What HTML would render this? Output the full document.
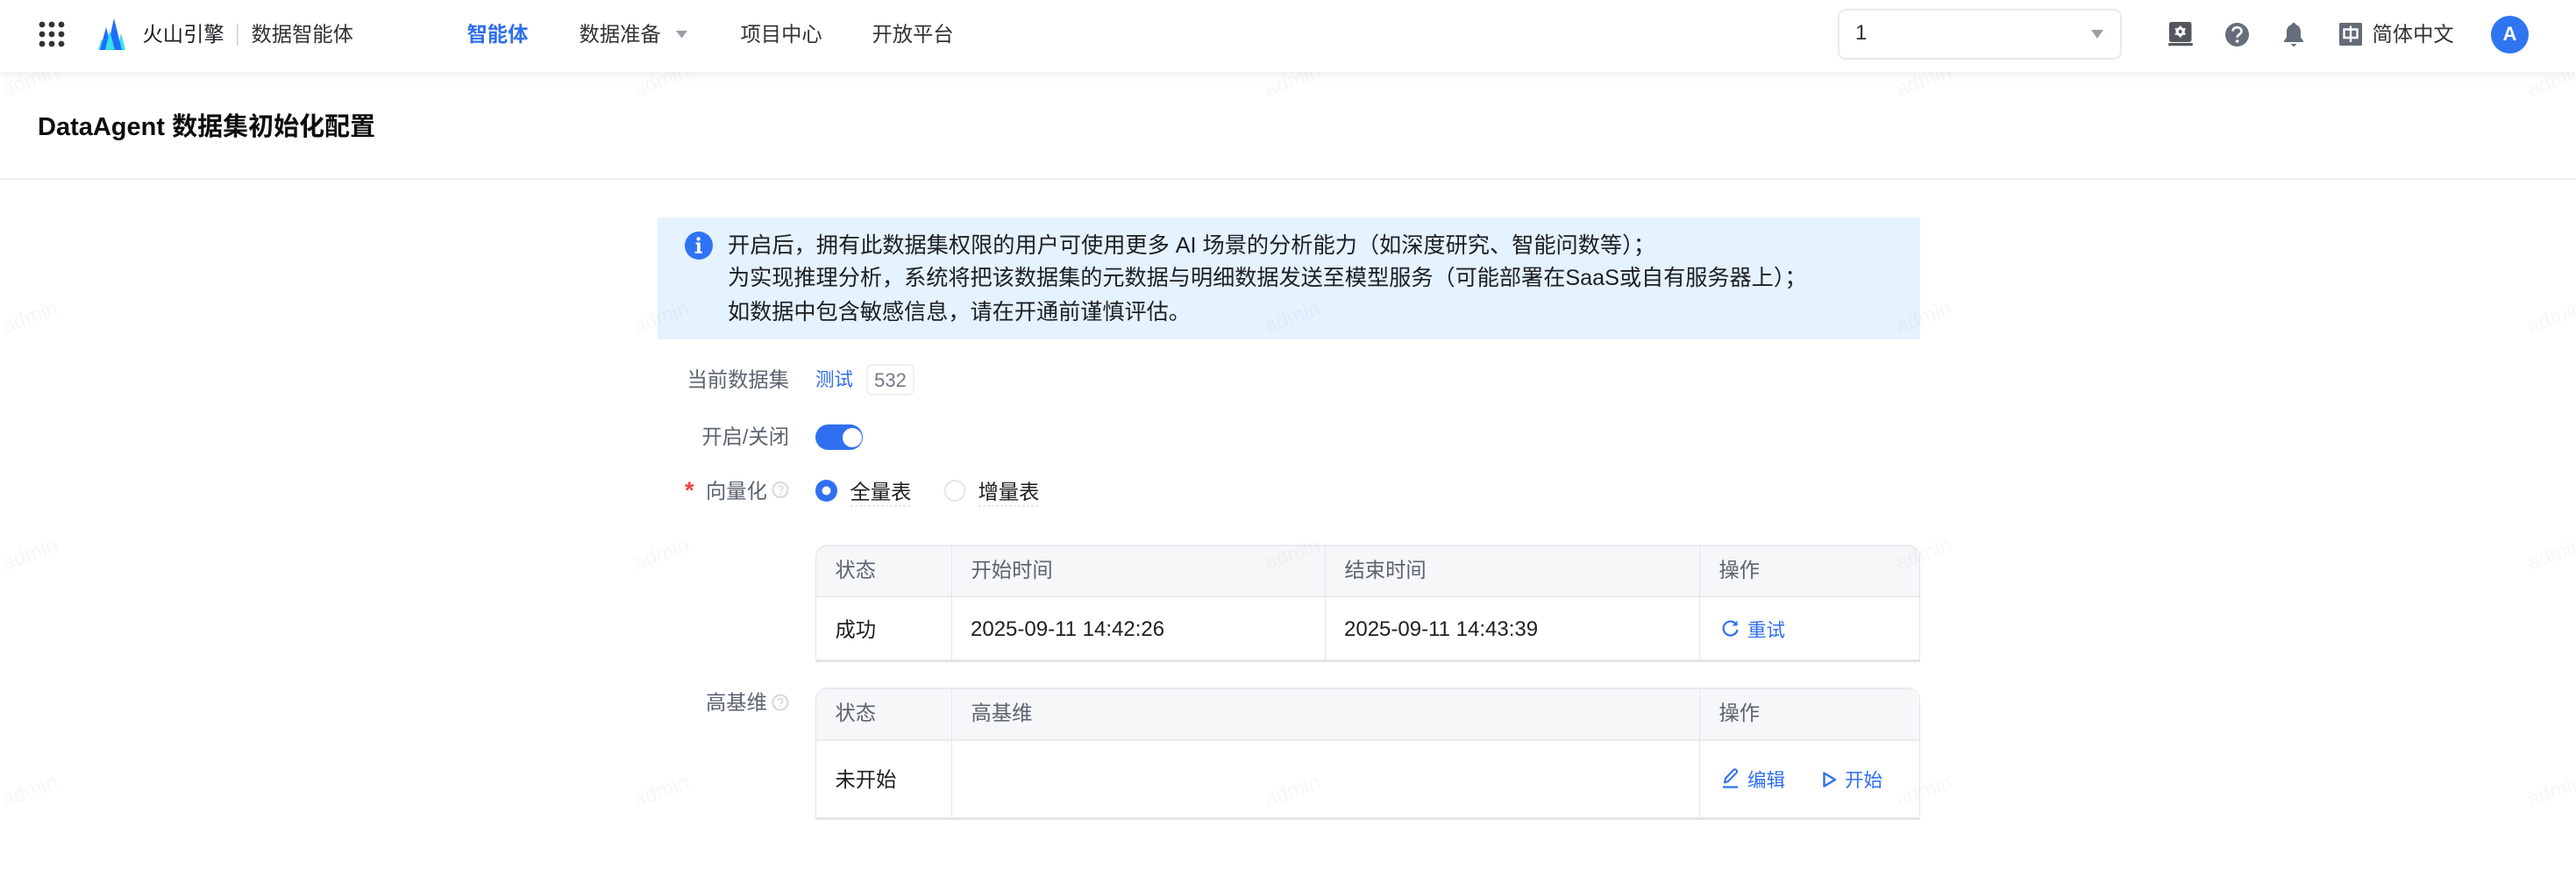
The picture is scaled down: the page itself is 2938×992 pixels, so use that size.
<!DOCTYPE html>
<html lang="zh-CN">
<head>
<meta charset="utf-8">
<title>DataAgent 数据集初始化配置</title>
<style>
html,body{margin:0;padding:0;background:#fff;}
body{position:relative;width:2938px;height:992px;overflow:hidden;font-family:"Liberation Sans","Noto Sans CJK SC",sans-serif;font-size:23.3px;color:#1c1f23;}
.t{position:absolute;white-space:nowrap;line-height:36px;height:36px;}
.box{position:absolute;box-sizing:border-box;}
.lab{color:#5c6470;}
.th{color:#5c6470;}
.blue{color:#2f6fed;}
.hdr{position:absolute;left:0;top:0;width:2938px;height:82px;background:#fff;box-shadow:0 2px 10px rgba(0,0,0,.09);z-index:5;}
svg{position:absolute;left:0;top:0;}
</style>
</head>
<body>

<!-- Page title -->
<div class="t" style="left:43px;top:127px;font-size:29px;font-weight:700;color:#0c0d0e">DataAgent 数据集初始化配置</div>
<div class="box" style="left:0;top:203px;width:2938px;height:2px;background:#eef0f3"></div>

<!-- Alert -->
<div class="box" style="left:750px;top:248px;width:1440px;height:139px;background:#e5f2ff"></div>
<svg width="2938" height="992" style="pointer-events:none">
  <circle cx="797" cy="280" r="16" fill="#2f73f5"/>
  <path d="M793.500 276.500h5.200v10.300h2.300v2h-8.400v-2h2.500v-8.300h-1.600z" fill="#fff"/>
  <circle cx="796.600" cy="272.400" r="2.200" fill="#fff"/>
</svg>
<div class="t" style="left:830px;top:262px;font-size:25.2px">开启后，拥有此数据集权限的用户可使用更多 AI 场景的分析能力（如深度研究、智能问数等）；</div>
<div class="t" style="left:830px;top:299px;font-size:25.15px">为实现推理分析，系统将把该数据集的元数据与明细数据发送至模型服务（可能部署在SaaS或自有服务器上）；</div>
<div class="t" style="left:830px;top:338px;font-size:25.15px">如数据中包含敏感信息，请在开通前谨慎评估。</div>

<!-- Form -->
<div class="t lab" style="right:2038px;top:414.500px">当前数据集</div>
<div class="t blue" style="left:930px;top:415px;font-size:21.5px">测试</div>
<div class="box" style="left:988px;top:415px;width:55px;height:36px;border:2px solid #eef0f3;border-radius:7px"></div>
<div class="t" style="left:988px;top:416px;width:55px;text-align:center;color:#737a87;font-size:22px">532</div>

<div class="t lab" style="right:2038px;top:479.500px">开启/关闭</div>
<div class="box" style="left:930px;top:484px;width:54px;height:29px;border-radius:15px;background:#3070f0"></div>
<div class="box" style="left:961px;top:487.500px;width:22px;height:22px;border-radius:50%;background:#fff"></div>

<div class="t" style="left:781px;top:541px;color:#f04142;font-size:27px;font-weight:700">*</div>
<div class="t lab" style="left:805px;top:541.500px">向量化</div>
<svg width="2938" height="992" style="pointer-events:none">
  <circle cx="890" cy="558.500" r="8.500" fill="none" stroke="#d4d8de" stroke-width="2"/>
  <path d="M887.400 556.200c.3-1.500 1.300-2.200 2.700-2.200 1.500 0 2.700 1 2.700 2.400 0 2.200-2.700 2.200-2.700 4.200" fill="none" stroke="#d4d8de" stroke-width="1.600"/>
  <circle cx="890.100" cy="563" r="1" fill="#d4d8de"/>
  <circle cx="890" cy="801" r="8.500" fill="none" stroke="#d4d8de" stroke-width="2"/>
  <path d="M887.400 798.700c.3-1.500 1.300-2.200 2.700-2.200 1.500 0 2.700 1 2.700 2.400 0 2.200-2.700 2.200-2.700 4.200" fill="none" stroke="#d4d8de" stroke-width="1.600"/>
  <circle cx="890.100" cy="805.500" r="1" fill="#d4d8de"/>
  <circle cx="942.500" cy="559.500" r="12.500" fill="#3070f0"/>
  <circle cx="942.500" cy="559.500" r="5" fill="#fff"/>
  <circle cx="1089" cy="559.500" r="11.500" fill="#fff" stroke="#e3e5ea" stroke-width="2"/>
  <path d="M970 577h69M1116 577h70" stroke="#dcdfe5" stroke-width="1.500" stroke-dasharray="3 2" fill="none"/>
</svg>
<div class="t" style="left:969.500px;top:542.500px">全量表</div>
<div class="t" style="left:1115.500px;top:542.500px">增量表</div>

<!-- Table 1 -->
<div class="box" style="left:930px;top:621px;width:1260px;height:134px;border:1px solid #e3e5ea;border-top:2px solid #e8eaee;border-bottom-width:3px;border-radius:14px 14px 0 0;overflow:hidden">
  <div class="box" style="left:0;top:0;width:100%;height:58px;background:#f6f7f9;border-bottom:2px solid #e8eaee"></div>
  <div class="box" style="left:154px;top:0;width:1px;height:100%;background:#e3e5ea"></div>
  <div class="box" style="left:580px;top:0;width:1px;height:100%;background:#e3e5ea"></div>
  <div class="box" style="left:1007px;top:0;width:1px;height:100%;background:#e3e5ea"></div>
</div>
<div class="t th" style="left:952.500px;top:632px">状态</div>
<div class="t th" style="left:1107.500px;top:632px">开始时间</div>
<div class="t th" style="left:1533.500px;top:632px">结束时间</div>
<div class="t th" style="left:1960.500px;top:632px">操作</div>
<div class="t" style="left:952.500px;top:699.500px">成功</div>
<div class="t" style="left:1107px;top:699.500px;font-size:24px">2025-09-11 14:42:26</div>
<div class="t" style="left:1533px;top:699.500px;font-size:24px">2025-09-11 14:43:39</div>
<div class="t blue" style="left:1993px;top:701px;font-size:21.5px">重试</div>

<!-- Table 2 -->
<div class="t lab" style="left:805px;top:783px">高基维</div>
<div class="box" style="left:930px;top:784px;width:1260px;height:151px;border:1px solid #e3e5ea;border-top:2px solid #e8eaee;border-bottom-width:3px;border-radius:14px 14px 0 0;overflow:hidden">
  <div class="box" style="left:0;top:0;width:100%;height:59px;background:#f6f7f9;border-bottom:2px solid #e8eaee"></div>
  <div class="box" style="left:154px;top:0;width:1px;height:100%;background:#e3e5ea"></div>
  <div class="box" style="left:1007px;top:0;width:1px;height:100%;background:#e3e5ea"></div>
</div>
<div class="t th" style="left:952.500px;top:795px">状态</div>
<div class="t th" style="left:1107.500px;top:795px">高基维</div>
<div class="t th" style="left:1960.500px;top:795px">操作</div>
<div class="t" style="left:952.500px;top:870.500px">未开始</div>
<div class="t blue" style="left:1993px;top:871.500px;font-size:21.5px">编辑</div>
<div class="t blue" style="left:2104px;top:871.500px;font-size:21.5px">开始</div>
<svg width="2938" height="992" style="pointer-events:none">
  <path d="M1979.600 711.200A8 8 0 1 0 1981.500 718" fill="none" stroke="#2f6fed" stroke-width="2.200"/>
  <path d="M1981.600 707.500v6h-6z" fill="#2f6fed"/>
  <path d="M1967 892.500l1-5 9-9.500c1-1 2.400-1 3.300 0s1 2.400 0 3.300l-9.300 9.600z" fill="none" stroke="#2f6fed" stroke-width="2" stroke-linejoin="round"/>
  <path d="M1965 897.500h17" stroke="#2f6fed" stroke-width="2.200"/>
  <path d="M2080.500 881.500l12.500 7.500-12.500 7.500z" fill="none" stroke="#2f6fed" stroke-width="2.400" stroke-linejoin="round"/>
</svg>

<!-- Watermarks -->
<svg width="2938" height="992" style="pointer-events:none;z-index:3" font-family="Liberation Sans, sans-serif" font-size="24" fill="#000" fill-opacity=".032">
  <text transform="translate(6 110) rotate(-20)">admin</text>
  <text transform="translate(726 110) rotate(-20)">admin</text>
  <text transform="translate(1446 110) rotate(-20)">admin</text>
  <text transform="translate(2166 110) rotate(-20)">admin</text>
  <text transform="translate(2886 110) rotate(-20)">admin</text>
  <text transform="translate(6 380) rotate(-20)">admin</text>
  <text transform="translate(726 380) rotate(-20)">admin</text>
  <text transform="translate(1446 380) rotate(-20)">admin</text>
  <text transform="translate(2166 380) rotate(-20)">admin</text>
  <text transform="translate(2886 380) rotate(-20)">admin</text>
  <text transform="translate(6 650) rotate(-20)">admin</text>
  <text transform="translate(726 650) rotate(-20)">admin</text>
  <text transform="translate(1446 650) rotate(-20)">admin</text>
  <text transform="translate(2166 650) rotate(-20)">admin</text>
  <text transform="translate(2886 650) rotate(-20)">admin</text>
  <text transform="translate(6 920) rotate(-20)">admin</text>
  <text transform="translate(726 920) rotate(-20)">admin</text>
  <text transform="translate(1446 920) rotate(-20)">admin</text>
  <text transform="translate(2166 920) rotate(-20)">admin</text>
  <text transform="translate(2886 920) rotate(-20)">admin</text>
</svg>

<!-- Header -->
<div class="hdr">
  <svg width="2938" height="82">
    <g fill="#333">
      <circle cx="48" cy="28" r="3.400"/><circle cx="59" cy="28" r="3.400"/><circle cx="70" cy="28" r="3.400"/>
      <circle cx="48" cy="39" r="3.400"/><circle cx="59" cy="39" r="3.400"/><circle cx="70" cy="39" r="3.400"/>
      <circle cx="48" cy="50" r="3.400"/><circle cx="59" cy="50" r="3.400"/><circle cx="70" cy="50" r="3.400"/>
    </g>
    <path d="M112 57l4-13 4 13zM134 57l4-19 5 19z" fill="#37e0e6"/>
    <path d="M114 57l7-26 7 26zM122 57l8-36 9 36z" fill="#1d6ffb"/>
    <path d="M120 57l5-22 6 22z" fill="#37e0e6"/>
    <rect x="270" y="27" width="1.600" height="25" fill="#cbd0d8"/>
    <path d="M771 35h13l-6.500 8.500z" fill="#9aa0a9"/>
    <path d="M2385 34h14l-7 10z" fill="#9aa0a9"/>
    <!-- laptop gear -->
    <rect x="2474" y="25" width="25.500" height="23" rx="2.500" fill="#54585e"/>
    <rect x="2473" y="49" width="28" height="3.200" rx="1.500" fill="#54585e"/>
    <circle cx="2486.700" cy="36" r="5.200" fill="#fff"/>
    <path d="M2486.700 29.500v13M2481 32.700l11.400 6.600M2481 39.300l11.400-6.600" stroke="#fff" stroke-width="2.200"/>
    <circle cx="2486.700" cy="36" r="2" fill="#54585e"/>
    <!-- question -->
    <circle cx="2551.500" cy="39.500" r="13.500" fill="#666e7b"/>
    <path d="M2546.500 35.500c.3-2.800 2.300-4.300 5-4.300 2.900 0 5 1.700 5 4.300 0 3.900-4.900 3.700-4.900 7.300" fill="none" stroke="#fff" stroke-width="2.600"/>
    <circle cx="2551.600" cy="47" r="1.800" fill="#fff"/>
    <!-- bell -->
    <path d="M2616 26c1.300 0 2.100.8 2.300 2 3.700 1.100 5.700 4.200 5.700 8.200v6.300l3 4v1.500h-22v-1.500l3-4v-6.300c0-4 2-7.100 5.700-8.200.2-1.200 1-2 2.300-2z" fill="#666e7b"/>
    <path d="M2612.500 50h7l-3.500 3.400z" fill="#666e7b"/>
    <!-- lang -->
    <rect x="2668" y="26" width="26" height="26" rx="1.500" fill="#636b78"/>
    <path d="M2673.500 33.500h15v9.500h-15zM2681 29.500v18.500" fill="none" stroke="#fff" stroke-width="2.400"/>
    <circle cx="2862.500" cy="39.500" r="21.500" fill="#3075f0"/>
  </svg>
  <div class="t" style="left:162.500px;top:21px;color:#1c1f23">火山引擎</div>
  <div class="t" style="left:286.500px;top:21px;color:#333">数据智能体</div>
  <div class="t" style="left:532.500px;top:21px;color:#2f6fed;font-weight:700">智能体</div>
  <div class="t" style="left:660.500px;top:21px;color:#333">数据准备</div>
  <div class="t" style="left:844.500px;top:21px;color:#333">项目中心</div>
  <div class="t" style="left:994.500px;top:21px;color:#333">开放平台</div>
  <div class="box" style="left:2096px;top:10px;width:324px;height:58px;border:2px solid #e8eaee;border-radius:9px"></div>
  <div class="t" style="left:2116px;top:20px;color:#333;font-size:24px">1</div>
  <div class="t" style="left:2705.500px;top:21px;color:#333">简体中文</div>
  <div class="t" style="left:2841px;top:21px;width:43px;text-align:center;color:#fff;font-weight:700;font-size:22px">A</div>
</div>

</body>
</html>
